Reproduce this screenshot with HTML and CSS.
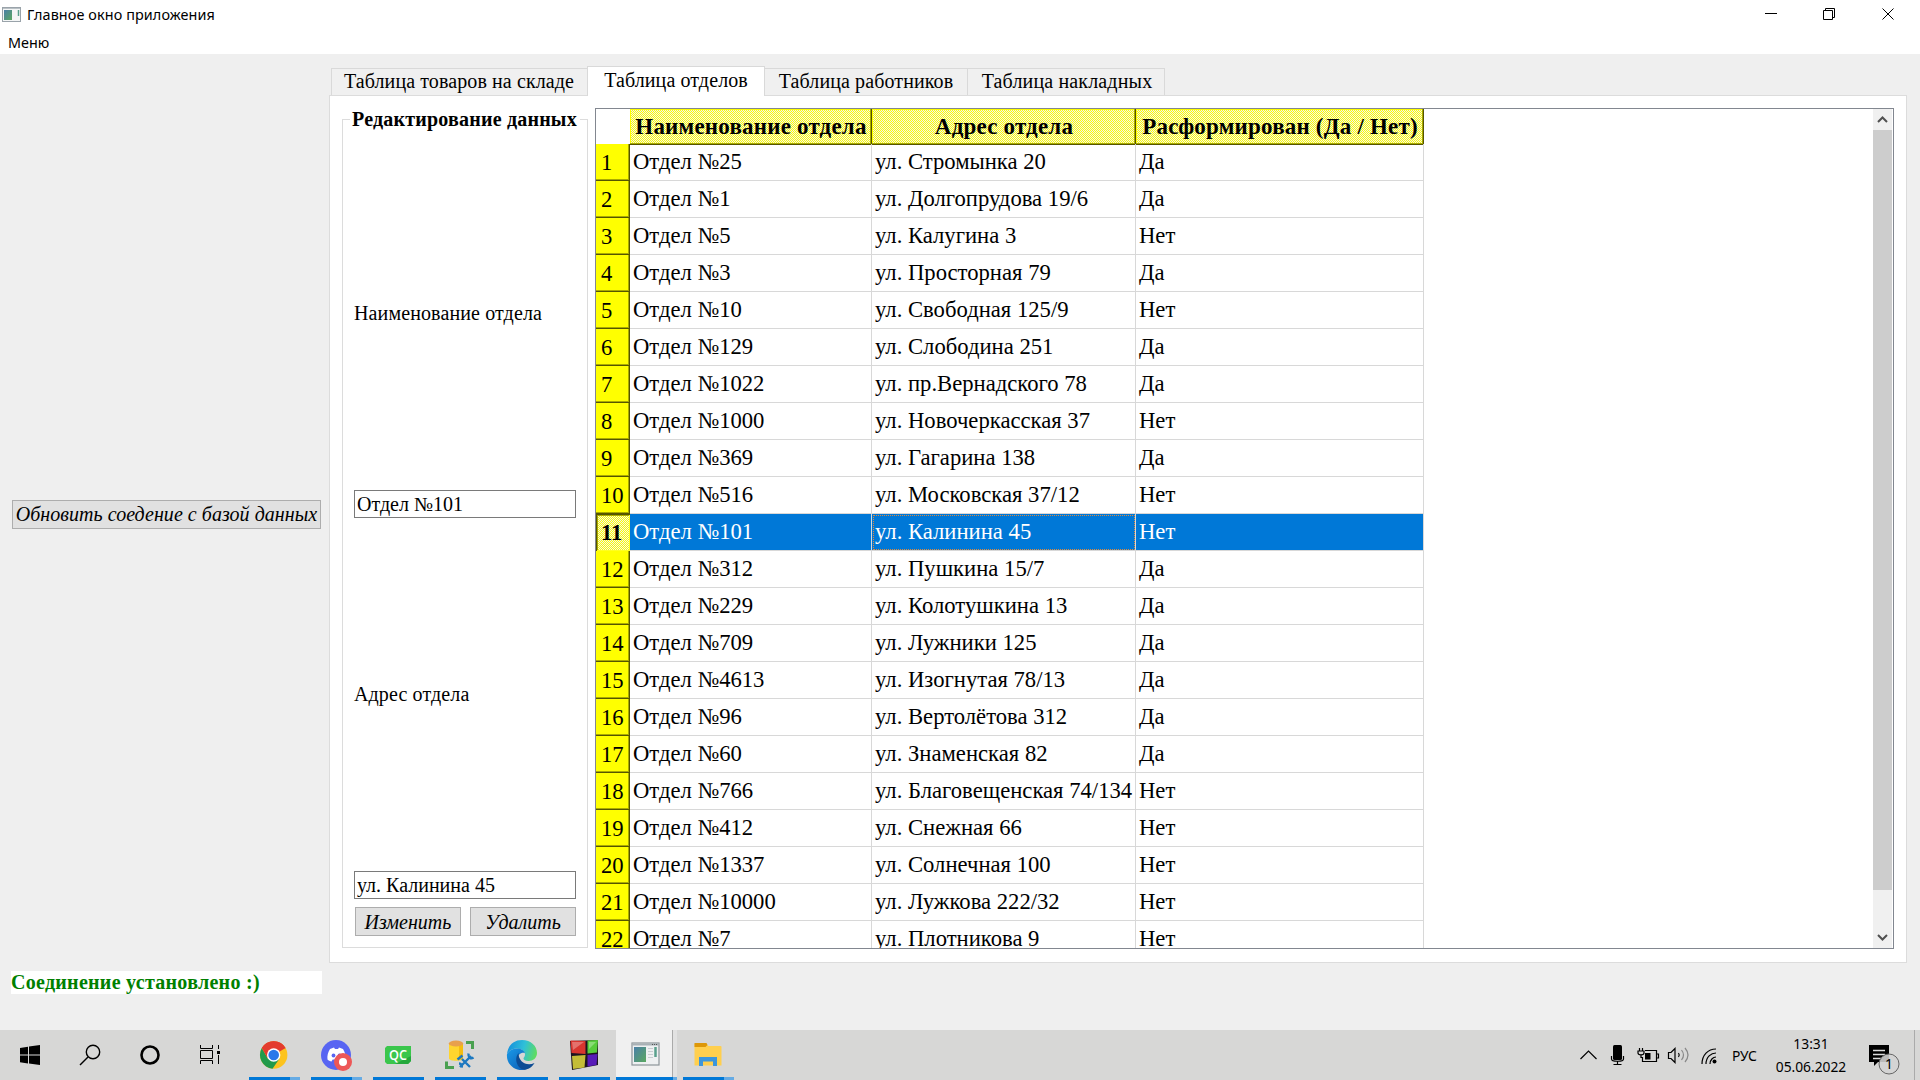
FILE: index.html
```html
<!DOCTYPE html>
<html lang="ru">
<head>
<meta charset="utf-8">
<title>Главное окно приложения</title>
<link rel="stylesheet" href="styles.css">
</head>
<body>
<header class="titlebar">
  <svg class="app-icon" width="20" height="16" viewBox="0 0 20 16"><rect x=".5" y=".5" width="18" height="14" fill="#f4f6f6" stroke="#9aa3aa"/><path d="M1 1.5h17" stroke="#b9c0c5"/><rect x="2" y="3" width="8" height="10" fill="url(#appg)"/><path d="M16.500 3v6" stroke="#5aa08c" stroke-width="1.500"/><defs><linearGradient id="appg" x1="0" y1="0" x2="1" y2="1"><stop offset="0" stop-color="#4a7fa8"/><stop offset="1" stop-color="#5aa860"/></linearGradient></defs></svg>
  <span class="title">Главное окно приложения</span>
  <svg class="win-buttons" width="180" height="29" viewBox="0 0 180 29" fill="none" stroke="#000"><path d="M25 13.500h12M85.500 10.500v-2h9v9h-2M83.500 10.500h9v9h-9zM142.500 8.500l11 11M153.500 8.500l-11 11"/></svg>
</header>
<nav class="menubar">Меню</nav>
<main class="client">
  <aside class="sidebar">
    <button class="btn refresh">Обновить соедение с базой данных</button>
    <div class="status">Соединение установлено :)</div>
  </aside>
  <section class="workspace">
    <div class="tabs">
      <div class="tab tab1">Таблица товаров на складе</div>
      <div class="tab active">Таблица отделов</div>
      <div class="tab tab3">Таблица работников</div>
      <div class="tab tab4">Таблица накладных</div>
    </div>
    <div class="pane">
      <fieldset class="editor">
        <legend>Редактирование данных</legend>
        <label class="field-name">Наименование отдела</label>
        <div class="edit">Отдел №101</div>
        <label class="field-name">Адрес отдела</label>
        <div class="edit">ул. Калинина 45</div>
        <div class="actions"><button class="btn">Изменить</button><button class="btn">Удалить</button></div>
      </fieldset>
      <div class="table-view">
        <div class="grid">
          <div class="row head"><div class="corner"></div><div class="th">Наименование отдела</div><div class="th">Адрес отдела</div><div class="th">Расформирован (Да / Нет)</div></div>
          <div class="row"><div class="num">1</div><div class="td">Отдел №25</div><div class="td">ул. Стромынка 20</div><div class="td">Да</div></div>
          <div class="row"><div class="num">2</div><div class="td">Отдел №1</div><div class="td">ул. Долгопрудова 19/6</div><div class="td">Да</div></div>
          <div class="row"><div class="num">3</div><div class="td">Отдел №5</div><div class="td">ул. Калугина 3</div><div class="td">Нет</div></div>
          <div class="row"><div class="num">4</div><div class="td">Отдел №3</div><div class="td">ул. Просторная 79</div><div class="td">Да</div></div>
          <div class="row"><div class="num">5</div><div class="td">Отдел №10</div><div class="td">ул. Свободная 125/9</div><div class="td">Нет</div></div>
          <div class="row"><div class="num">6</div><div class="td">Отдел №129</div><div class="td">ул. Слободина 251</div><div class="td">Да</div></div>
          <div class="row"><div class="num">7</div><div class="td">Отдел №1022</div><div class="td">ул. пр.Вернадского 78</div><div class="td">Да</div></div>
          <div class="row"><div class="num">8</div><div class="td">Отдел №1000</div><div class="td">ул. Новочеркасская 37</div><div class="td">Нет</div></div>
          <div class="row"><div class="num">9</div><div class="td">Отдел №369</div><div class="td">ул. Гагарина 138</div><div class="td">Да</div></div>
          <div class="row"><div class="num">10</div><div class="td">Отдел №516</div><div class="td">ул. Московская 37/12</div><div class="td">Нет</div></div>
          <div class="row selected"><div class="num">11</div><div class="td">Отдел №101</div><div class="td current">ул. Калинина 45</div><div class="td">Нет</div></div>
          <div class="row"><div class="num">12</div><div class="td">Отдел №312</div><div class="td">ул. Пушкина 15/7</div><div class="td">Да</div></div>
          <div class="row"><div class="num">13</div><div class="td">Отдел №229</div><div class="td">ул. Колотушкина 13</div><div class="td">Да</div></div>
          <div class="row"><div class="num">14</div><div class="td">Отдел №709</div><div class="td">ул. Лужники 125</div><div class="td">Да</div></div>
          <div class="row"><div class="num">15</div><div class="td">Отдел №4613</div><div class="td">ул. Изогнутая 78/13</div><div class="td">Да</div></div>
          <div class="row"><div class="num">16</div><div class="td">Отдел №96</div><div class="td">ул. Вертолётова 312</div><div class="td">Да</div></div>
          <div class="row"><div class="num">17</div><div class="td">Отдел №60</div><div class="td">ул. Знаменская 82</div><div class="td">Да</div></div>
          <div class="row"><div class="num">18</div><div class="td">Отдел №766</div><div class="td">ул. Благовещенская 74/134</div><div class="td">Нет</div></div>
          <div class="row"><div class="num">19</div><div class="td">Отдел №412</div><div class="td">ул. Снежная 66</div><div class="td">Нет</div></div>
          <div class="row"><div class="num">20</div><div class="td">Отдел №1337</div><div class="td">ул. Солнечная 100</div><div class="td">Нет</div></div>
          <div class="row"><div class="num">21</div><div class="td">Отдел №10000</div><div class="td">ул. Лужкова 222/32</div><div class="td">Нет</div></div>
          <div class="row"><div class="num">22</div><div class="td">Отдел №7</div><div class="td">ул. Плотникова 9</div><div class="td">Нет</div></div>
        </div>
        <div class="scrollbar">
          <svg class="arrow" width="19" height="21" viewBox="0 0 19 21"><path d="M5 13l4.500-4.500L14 13" fill="none" stroke="#505050" stroke-width="2"/></svg>
          <div class="thumb"></div>
          <svg class="arrow" width="19" height="21" viewBox="0 0 19 21"><path d="M5 8l4.500 4.500L14 8" fill="none" stroke="#505050" stroke-width="2"/></svg>
        </div>
      </div>
    </div>
  </section>
</main>
<footer class="taskbar">
  <div class="slot"><svg width="60" height="50"><path d="M20 18l8-1.200V24.500h-8zM29 16.600L40 15v9.500H29zM20 25.500h8v8L20 32.300zM29 25.500h11V35l-11-1.500z"/></svg></div>
  <div class="slot"><svg width="60" height="50" fill="none" stroke="#000" stroke-width="1.400"><circle cx="33" cy="22" r="6.700"/><path d="M28 27l-8 8"/></svg></div>
  <div class="slot"><svg width="60" height="50"><circle cx="30" cy="25" r="8.500" fill="none" stroke="#000" stroke-width="2.600"/></svg></div>
  <div class="slot"><svg width="60" height="50" fill="none" stroke="#000"><path d="M20.500 15v3.500h12V15M20.500 34v-3.500h12V34M20.500 20.500h12v8h-12zM38.500 15v4M38.500 25v9"/><path d="M37 21h3v3h-3z" fill="#000" stroke="none"/></svg></div>
  <div class="app first more"><svg width="62" height="50"><circle cx="30.700" cy="25" r="13.700" fill="#fcc31e"/><path d="M30.700 25L18.800 18.100A13.700 13.700 0 0 1 42.600 18.100z" fill="#e33b2e"/><path d="M18.800 18.100A13.700 13.700 0 0 0 29.500 38.650L36.600 28.400L30.700 25L24.800 28.400z" fill="#219a4b"/><path d="M30.700 18.200H42.600A13.700 13.700 0 0 0 18.800 18.100L24.800 28.400z" fill="#e33b2e"/><circle cx="30.700" cy="25" r="6.700" fill="#fff"/><circle cx="30.700" cy="25" r="5.300" fill="#2a78ea"/></svg></div>
  <div class="app more"><svg width="62" height="50"><circle cx="31" cy="25" r="15" fill="#5865f2"/><path d="M25 19l4-1.500 1 1.500h3l1-1.500 4 1.500c2 3 3 7 2.500 10.500-1.500 1.200-3 1.800-4 2l-1.200-2h-7.600l-1.200 2c-1.500-.3-3-1-4-2C22 26 23 22 25 19z" fill="#fff"/><circle cx="28.500" cy="25.500" r="1.900" fill="#5865f2"/><circle cx="34.500" cy="25.500" r="1.900" fill="#5865f2"/><circle cx="38" cy="32" r="9" fill="#ed5757"/><circle cx="38" cy="32" r="4" fill="#fff"/></svg></div>
  <div class="app"><svg width="62" height="50"><path d="M20 16h24v15l-3 3H20l-2-2V18z" fill="#3ac64c"/><path d="M44 26v5l-3 3H28z" fill="#24a83c"/><text x="31" y="30" class="qc" text-anchor="middle" textLength="18" lengthAdjust="spacingAndGlyphs">QC</text></svg></div>
  <div class="app"><svg width="62" height="50"><path d="M20 13.500v15c0 3 14 3 14 0v-15z" fill="#ffd52e"/><path d="M30 14v16c3-.5 4-1 4-2V14z" fill="#f5bd10"/><ellipse cx="27" cy="13.500" rx="7.200" ry="3" fill="#e8a04c"/><path d="M37 12.500h6.500V19M17.500 31.500v6H25" fill="none" stroke="#4aa050" stroke-width="3"/><path d="M31 37l11-11M41 37l-8-8" fill="none" stroke="#1c78c0" stroke-width="2.400"/><path d="M28.500 29.500l5-4M39.500 23.500c-.5 4 2 6 5 4M30 33.500c2.500 0 3.500 2 2.500 4" fill="none" stroke="#1c78c0" stroke-width="2.400"/></svg></div>
  <div class="app"><svg width="62" height="50"><defs><linearGradient id="eg" x1="0" y1=".3" x2="1" y2=".5"><stop offset="0" stop-color="#168fdc"/><stop offset=".55" stop-color="#2fc0d8"/><stop offset="1" stop-color="#5fdc60"/></linearGradient><linearGradient id="eb" x1="0" y1="0" x2="1" y2="1"><stop offset="0" stop-color="#1a9ae8"/><stop offset="1" stop-color="#0a58b0"/></linearGradient></defs><path d="M16 24C17 15 23 10 31 10c9 0 15 6 15 13 0 5-4 8-8.500 8-3 0-5-1-5-2.500 0-1 1.500-1.500 1.500-4 0-3-3-6-8-6-4 0-8 2-10 5.500z" fill="url(#eg)"/><path d="M16 24c2-3.500 6-5.500 10-5.500 4 0 7 2 8 4.500-5-1-8 3-7 7 1 5 6 8.500 11.500 7.500-2 1.500-4.500 2.500-7.500 2.500-9 0-16-7-15-16z" fill="url(#eb)"/><path d="M27.500 23c-5 6-1 16 6 16.800 4-.5 8-3 10-6.800-8 3.500-16-1-16-10z" fill="#0c4c94"/></svg></div>
  <div class="app"><svg width="62" height="50"><path d="M17 11l28-1v25l-26 5z" fill="#1d1520"/><path d="M17.500 10.500l15 .5v13l-14-1z" fill="#d8362f"/><path d="M34.500 10.500l10.500-.5-1 12.500-9.500 1z" fill="#58cc3c"/><path d="M19 26l13.500-1-1 12.500L20 39z" fill="#c4bd38"/><path d="M34.500 25l10-1-1 11-9 1.500z" fill="#571bb8"/><path d="M19 12h12l-11 8zM36 12h7l-7 7z" fill="#fff" opacity=".3"/></svg></div>
  <div class="app current-app"><svg width="62" height="50"><rect x="17" y="13" width="27" height="22" fill="#eef0f1" stroke="#8d9499" stroke-width="1.200"/><path d="M17 14.500h27" stroke="#a8b0b5" stroke-width="2"/><path d="M37 14.500h6" stroke="#555" stroke-dasharray="1 1"/><rect x="19" y="17" width="12" height="15" fill="url(#appg)"/><path d="M33 18.500h5M33 21.500h5M33 24.500h5M33 27.500h5" stroke="#c8ccd0"/><path d="M40.500 17v10" stroke="#5aa08c" stroke-width="2.500"/><path d="M57.500 0v47" stroke="#aaa"/></svg></div>
  <div class="app more"><svg width="62" height="50"><path d="M17.500 14h12l2 2h12a1 1 0 0 1 1 1v18.500h-27z" fill="#ffcf4e"/><path d="M17.500 13h12l1 2-2 2h-11z" fill="#dd9708"/><path d="M22 36v-9h18v9h-4v-4.500H26V36z" fill="#3c96dc"/></svg></div>
  <div class="tray">
    <svg width="154" height="50" fill="none" stroke="#000" stroke-width="1.200"><path d="M10.500 29l8-8 8 8"/><rect x="43" y="15" width="9" height="15" rx="1.500" fill="#000" stroke="none"/><path d="M41.500 26v3c0 3 12 3 12 0v-3M47.500 31v3.500M43.500 34.500h8"/><path d="M75 20.500h11.500v11h-14V27M86.500 24h2v4h-2M69.500 18v3M72.500 18v3M68 21h6v2c0 2.500-6 2.500-6 0zM71 25v2.500h2"/><path d="M75 23h5.500v6.500H75z" fill="#000" stroke="none"/><path d="M98.500 22.500h2.500l4-4v14l-4-4h-2.500z"/><path d="M108.500 23q1.500 2 0 4"/><path d="M111.500 20q4 5 0 10M115 18q6 7 0 14" stroke="#888"/><path d="M132 34c0-9 6-15 14-15M136 34c0-7 5-11 10-11M140 34c0-4 3-7 6-7"/><circle cx="144.500" cy="31.500" r="2" fill="#000" stroke="none"/></svg>
    <span class="lang">РУС</span>
    <div class="clock"><span>13:31</span><span>05.06.2022</span></div>
    <svg class="notice" width="60" height="50"><path d="M9 15h20v17H18l-4 4v-4H9z"/><path d="M13 20.500h12M13 24.500h12M13 28.500h8" stroke="#ddd" stroke-width="1.300"/><circle cx="29" cy="34" r="10" fill="#d4d4d4" fill-opacity=".88" stroke="#666"/><text x="29" y="39" text-anchor="middle" class="badge">1</text><path d="M54.500 0v50" stroke="#aaa"/></svg>
  </div>
</footer>
</body>
</html>
```
FILE: styles.css
```css
* { box-sizing: border-box; }
body {
  margin: 0;
  width: 1920px;
  height: 1080px;
  overflow: hidden;
  display: flex;
  flex-direction: column;
  background: #efefef;
  color: #000;
  font: 20px/23px "Liberation Serif", serif;
  white-space: nowrap;
}
svg { display: block; flex: none; }
.titlebar {
  height: 29px;
  display: flex;
  align-items: center;
  background: #fff;
  padding-left: 2px;
  font: 14.4px/20px "Noto Sans", sans-serif;
  letter-spacing: 0.1px;
}
.app-icon { margin-right: 5px; }
.title { flex: 1; }
.menubar {
  height: 25px;
  padding-left: 8px;
  background: #fff;
  font: 14.4px/27px "Noto Sans", sans-serif;
}
.client { height: 976px; display: flex; }
.sidebar {
  width: 330px;
  flex: none;
  padding-left: 11px;
  display: flex;
  flex-direction: column;
}
.btn {
  height: 30px;
  padding: 0;
  border: 1px solid #adadad;
  background: #e1e1e1;
  color: #000;
  font: italic 20px/26px "Liberation Serif", serif;
}
.refresh {
  width: 309px;
  height: 29px;
  margin: 446px 0 442px 1px;
  flex: none;
  line-height: 25px;
  letter-spacing: 0.04px;
}
.status {
  width: 311px;
  height: 23px;
  background: #fff;
  color: #008000;
  font-weight: bold;
  letter-spacing: 0.28px;
}
.workspace { width: 1578px; flex: none; padding-top: 12px; margin-left: -1px; }
.tabs { height: 29px; display: flex; align-items: flex-end; padding-left: 2px; }
.tab {
  height: 27px;
  border: 1px solid #d9d9d9;
  border-width: 1px 1px 0 0;
  background: #f0f0f0;
  line-height: 25px;
  text-align: center;
  letter-spacing: 0.1px;
}
.tab1 { width: 257px; border-left-width: 1px; padding-right: 1px; }
.tab3 { width: 203px; }
.tab4 { width: 197px; padding-left: 2px; letter-spacing: 0.15px; }
.tab.active {
  width: 178px;
  height: 30px;
  margin: 0 0 -1px -1px;
  border-left-width: 1px;
  background: #fff;
  line-height: 27px;
  position: relative;
}
.pane {
  height: 868px;
  border: 1px solid #dcdcdc;
  background: #fff;
  padding: 12px 12px 13px;
  display: flex;
  gap: 7px;
}
.editor {
  width: 246px;
  min-width: 0;
  flex: none;
  height: 840px;
  margin: 0;
  border: 1px solid #dcdcdc;
  padding: 6px 11px 0;
}
.editor legend {
  margin-left: -4px;
  padding: 0 3px 0 2px;
  font-weight: bold;
  letter-spacing: 0.2px;
}
.field-name { display: flex; align-items: center; height: 353px; letter-spacing: 0.12px; }
.edit {
  width: 222px;
  height: 28px;
  border: 1px solid #7a7a7a;
  padding-left: 2px;
  line-height: 26px;
}
.actions { display: flex; gap: 9px; padding: 8px 0 0 1px; }
.actions .btn { width: 106px; height: 29px; flex: none; }
.table-view {
  width: 1299px;
  flex: none;
  height: 841px;
  border: 1px solid #828790;
  display: flex;
  justify-content: space-between;
  overflow: hidden;
  padding-right: 1px;
}
.grid { width: 828px; height: 839px; overflow: hidden; font-size: 22.67px; }
.row { display: grid; grid-template-columns: 34px 242px 264px 288px; height: 37px; line-height: 35px; }
.head { height: 35px; line-height: 36px; }
.th {
  background: repeating-conic-gradient(#ffff00 0 25%, #f0f0f0 0 50%) 0 0 / 2px 2px;
  box-shadow: inset -1px -1px #555500, inset -2px -2px #aaaa00, inset 1px 1px #ffff00;
  font-weight: bold;
  font-size: 23px;
  letter-spacing: 0.2px;
  text-align: center;
}
.num {
  background: #ffff00;
  padding-left: 5px;
  line-height: 37px;
  box-shadow: inset -1px -1px #555500, inset -2px -2px #aaaa00;
}
.td { border: 1px solid #d8d8d8; border-width: 0 1px 1px 0; padding-left: 3px; }
.selected .num {
  background: repeating-conic-gradient(#ffff00 0 25%, #f0f0f0 0 50%) 0 0 / 2px 2px;
  box-shadow: inset 1px 1px #555500, inset -1px -1px #ffff22, inset 2px 2px #aaaa00;
  font-weight: bold;
}
.selected .td { background: #0078d7; color: #fff; }
.selected .current { outline: 1px dotted #e08a3c; outline-offset: -2px; }
.scrollbar { width: 19px; background: #f0f0f0; display: flex; flex-direction: column; }
.thumb { height: 760px; background: #cdcdcd; margin-bottom: 37px; }
.taskbar { height: 50px; background: #d7d7d6; display: flex; }
.slot { width: 60px; }
.app { width: 62px; position: relative; flex: none; }
.first { margin-left: 3px; }
.app::after {
  content: "";
  position: absolute;
  left: 6px;
  bottom: 0;
  width: 51px;
  height: 3px;
  background: #0078d7;
}
.more::after { background: linear-gradient(90deg, #0078d7 41px, #66abe4 41px); }
.current-app { background: linear-gradient(90deg, transparent 1px, #f0f0f0 1px 57px, #e2e2e2 57px); }
.current-app::after { left: 1px; width: 61px; background: linear-gradient(90deg, #0078d7 57px, #66abe4 57px); }
.qc { fill: #fff; font: 600 14px "Open Sans", sans-serif; }
.tray {
  margin-left: auto;
  width: 350px;
  display: flex;
  align-items: center;
  font: 13.8px/23px "Noto Sans", sans-serif;
}
.lang { width: 56px; padding-left: 8px; flex: none; }
.clock { width: 62px; flex: none; display: flex; flex-direction: column; align-items: center; }
.notice { margin-left: auto; margin-right: 0; }
.badge { font: 14px "Noto Sans", sans-serif; }
```
